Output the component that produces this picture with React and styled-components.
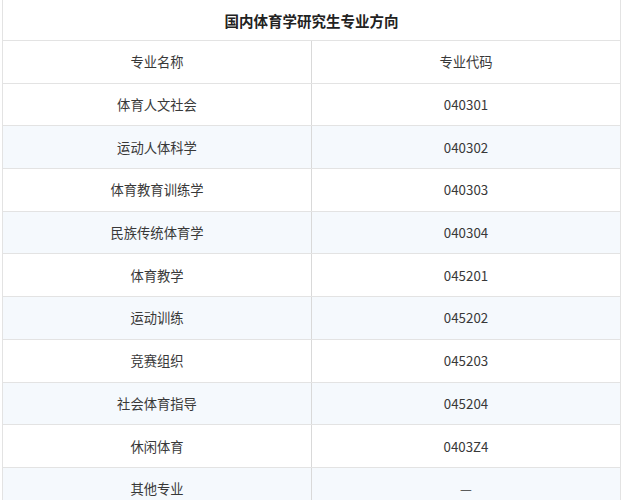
import styled, { createGlobalStyle } from "styled-components";

const GlobalStyle = createGlobalStyle`
  body {
    margin: 0;
    background: #ffffff;
    font-family: "Noto Sans CJK SC", "Noto Sans", sans-serif;
  }
`;

const Wrapper = styled.div`
  padding: 0 1px 0 2px;
  height: 500px;
  overflow: hidden;
`;

const Table = styled.table`
  width: 619px;
  border-collapse: collapse;
  table-layout: fixed;
  color: #383838;
`;

const TitleCell = styled.th`
  height: 40px;
  padding: 0;
  border: 1px solid #e3e3e3;
  border-top: none;
  font-size: 14.5px;
  font-weight: 700;
  color: #222222;
  text-align: center;
  background: #ffffff;
`;

const Row = styled.tr`
  background: ${(p) => (p.$striped ? "#f5f9fd" : "#ffffff")};
`;

const Cell = styled.td`
  height: 41.7px;
  padding: 0;
  border: 1px solid #e3e3e3;
  border-right-color: ${(p) => (p.$first ? "#d9d9d9" : "#e3e3e3")};
  font-size: 13.3px;
  font-weight: 400;
  text-align: center;
  vertical-align: middle;
`;

const majors = [
  ["体育人文社会", "040301"],
  ["运动人体科学", "040302"],
  ["体育教育训练学", "040303"],
  ["民族传统体育学", "040304"],
  ["体育教学", "045201"],
  ["运动训练", "045202"],
  ["竞赛组织", "045203"],
  ["社会体育指导", "045204"],
  ["休闲体育", "0403Z4"],
  ["其他专业", "—"],
];

export default function App() {
  return (
    <Wrapper>
      <GlobalStyle />
      <Table>
        <thead>
          <tr>
            <TitleCell colSpan={2}>国内体育学研究生专业方向</TitleCell>
          </tr>
        </thead>
        <tbody>
          <Row>
            <Cell $first>专业名称</Cell>
            <Cell>专业代码</Cell>
          </Row>
          {majors.map(([name, code], i) => (
            <Row key={code} $striped={i % 2 === 1}>
              <Cell $first>{name}</Cell>
              <Cell>{code}</Cell>
            </Row>
          ))}
        </tbody>
      </Table>
    </Wrapper>
  );
}
